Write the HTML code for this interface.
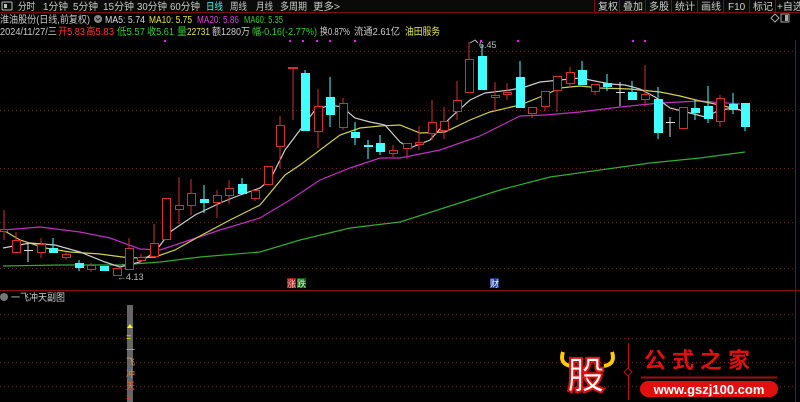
<!DOCTYPE html>
<html><head><meta charset="utf-8"><style>
body{margin:0;background:#000;width:800px;height:402px;overflow:hidden;font-family:"Liberation Sans","Noto Sans CJK SC",sans-serif}
svg{display:block}
text{font-family:"Liberation Sans","Noto Sans CJK SC",sans-serif}
</style></head><body>
<svg width="800" height="402" viewBox="0 0 800 402">
<rect width="800" height="402" fill="#000"/>
<rect x="0" y="0" width="800" height="12" fill="#0a0a0a"/>
<line x1="0" y1="12.5" x2="800" y2="12.5" stroke="#7a0d12"/>
<rect x="2" y="2" width="10" height="8" fill="none" stroke="#bbb" rx="1"/><rect x="4" y="4" width="3" height="4" fill="#bbb"/>
<g font-size="10" fill="#ccc" lengthAdjust="spacingAndGlyphs">
<text x="18" y="10" textLength="17" lengthAdjust="spacingAndGlyphs">分时</text>
<text x="43" y="10" textLength="25" lengthAdjust="spacingAndGlyphs">1分钟</text>
<text x="73" y="10" textLength="25" lengthAdjust="spacingAndGlyphs">5分钟</text>
<text x="103" y="10" textLength="31" lengthAdjust="spacingAndGlyphs">15分钟</text>
<text x="137" y="10" textLength="30" lengthAdjust="spacingAndGlyphs">30分钟</text>
<text x="170" y="10" textLength="30" lengthAdjust="spacingAndGlyphs">60分钟</text>
<text x="206" y="10" fill="#3ff" textLength="17" lengthAdjust="spacingAndGlyphs">日线</text>
<text x="230" y="10" textLength="17" lengthAdjust="spacingAndGlyphs">周线</text>
<text x="256" y="10" textLength="17" lengthAdjust="spacingAndGlyphs">月线</text>
<text x="280" y="10" textLength="27" lengthAdjust="spacingAndGlyphs">多周期</text>
<text x="313" y="10" textLength="27" lengthAdjust="spacingAndGlyphs">更多&gt;</text>
</g>
<g stroke="#7a0d12"><line x1="594.5" y1="0" x2="594.5" y2="12"/><line x1="619.5" y1="0" x2="619.5" y2="12"/><line x1="645.5" y1="0" x2="645.5" y2="12"/><line x1="671.5" y1="0" x2="671.5" y2="12"/><line x1="697.5" y1="0" x2="697.5" y2="12"/><line x1="723.5" y1="0" x2="723.5" y2="12"/><line x1="749.5" y1="0" x2="749.5" y2="12"/><line x1="775.5" y1="0" x2="775.5" y2="12"/></g>
<g font-size="10" fill="#ccc"><text x="598" y="10">复权</text><text x="623" y="10">叠加</text><text x="649" y="10">多股</text><text x="675" y="10">统计</text><text x="701" y="10">画线</text><text x="728" y="10">F10</text><text x="753" y="10">标记</text><text x="777" y="10">+自选</text></g>
<!-- legend -->
<g font-size="10">
<text x="0" y="23" fill="#ccc" textLength="90" lengthAdjust="spacingAndGlyphs">淮油股份(日线,前复权)</text>
<circle cx="98" cy="19" r="4" fill="#888"/><path d="M96 18l2 2 2-2" stroke="#222" fill="none"/>
<text x="105" y="23" fill="#ddd" textLength="40" lengthAdjust="spacingAndGlyphs">MA5: 5.74</text>
<text x="149" y="23" fill="#e6e64a" textLength="43" lengthAdjust="spacingAndGlyphs">MA10: 5.75</text>
<text x="197" y="23" fill="#e040e0" textLength="42" lengthAdjust="spacingAndGlyphs">MA20: 5.86</text>
<text x="244" y="23" fill="#3c3" textLength="39" lengthAdjust="spacingAndGlyphs">MA60: 5.35</text>
<text x="0" y="35" fill="#ccc" textLength="57" lengthAdjust="spacingAndGlyphs">2024/11/27/三</text>
<text x="58" y="35" fill="#f33" textLength="27" lengthAdjust="spacingAndGlyphs">开5.83</text>
<text x="86" y="35" fill="#f33" textLength="28" lengthAdjust="spacingAndGlyphs">高5.83</text>
<text x="117" y="35" fill="#3c3" textLength="28" lengthAdjust="spacingAndGlyphs">低5.57</text>
<text x="147" y="35" fill="#3c3" textLength="27" lengthAdjust="spacingAndGlyphs">收5.61</text>
<text x="177" y="35" fill="#3c3" textLength="10" lengthAdjust="spacingAndGlyphs">量</text>
<text x="187" y="35" fill="#e6e64a" textLength="23" lengthAdjust="spacingAndGlyphs">22731</text>
<text x="212" y="35" fill="#ccc" textLength="38" lengthAdjust="spacingAndGlyphs">额1280万</text>
<text x="252" y="35" fill="#3c3" textLength="65" lengthAdjust="spacingAndGlyphs">幅-0.16(-2.77%)</text>
<text x="320" y="35" fill="#ccc" textLength="30" lengthAdjust="spacingAndGlyphs">换0.87%</text>
<text x="354" y="35" fill="#ccc" textLength="46" lengthAdjust="spacingAndGlyphs">流通2.61亿</text>
<text x="405" y="35" fill="#e6e64a" textLength="35" lengthAdjust="spacingAndGlyphs">油田服务</text>
</g>
<path d="M771 18l4-4 4 4-4 4z" stroke="#aaa" fill="none"/><rect x="781" y="14" width="8" height="8" fill="none" stroke="#aaa"/><rect x="785" y="15" width="3" height="6" fill="#aaa"/>
<g stroke="#7a1a1a" stroke-dasharray="1 3">
<line x1="0" y1="51.5" x2="795" y2="51.5"/><line x1="0" y1="110.5" x2="795" y2="110.5"/><line x1="0" y1="168.5" x2="795" y2="168.5"/><line x1="0" y1="222.5" x2="795" y2="222.5"/><line x1="0" y1="268.5" x2="795" y2="268.5"/>
<line x1="0" y1="314.5" x2="795" y2="314.5"/><line x1="0" y1="338.5" x2="795" y2="338.5"/><line x1="0" y1="362.5" x2="795" y2="362.5"/><line x1="0" y1="386.5" x2="795" y2="386.5"/>
</g>
<line x1="795.5" y1="40" x2="795.5" y2="402" stroke="#7a0d12"/>
<line x1="0" y1="290.5" x2="800" y2="290.5" stroke="#8a0d12"/>
<g stroke="#e020e0" stroke-width="2"><line x1="165" y1="40" x2="165" y2="42"/><line x1="290" y1="40" x2="290" y2="42"/><line x1="303" y1="40" x2="303" y2="42"/><line x1="317" y1="40" x2="317" y2="42"/><line x1="330" y1="40" x2="330" y2="42"/><line x1="355" y1="40" x2="355" y2="42"/><line x1="481" y1="40" x2="481" y2="42"/><line x1="518" y1="40" x2="518" y2="42"/><line x1="633" y1="40" x2="633" y2="42"/><line x1="645" y1="40" x2="645" y2="42"/></g>
<g fill="none" stroke-width="1.2">
<polyline stroke="#3a3" points="3,266 60,265 120,265 160,262 200,257 260,252 300,240 350,228 400,222 450,206 500,190 550,177 600,170 650,163 700,158 745,152"/>
<polyline stroke="#c030c0" points="3,230 40,227 80,232 110,238 140,249 160,250 190,240 220,230 260,218 290,200 320,180 350,168 380,158 400,158 440,150 480,136 520,116 545,115 580,112 620,107 660,103 700,101 740,104"/>
<polyline stroke="#d0d050" points="3,230 20,240 45,248 70,252 100,254 130,258 155,257 175,250 200,236 230,220 260,205 285,175 300,165 320,150 340,135 360,128 380,126 400,125 420,133 445,132 470,120 490,112 520,105 545,95 560,88 580,86 600,88 630,89 660,92 680,96 700,101 720,105 740,110"/>
<polyline stroke="#ccc" points="3,248 30,243 55,245 80,252 105,262 120,267 140,262 155,252 170,232 195,215 220,203 240,195 260,188 270,180 285,150 300,130 315,110 330,105 342,107 355,118 370,122 385,125 400,142 410,148 430,140 450,118 470,100 485,93 510,90 525,87 540,82 560,80 580,78 600,82 610,84 625,85 640,89 655,97 670,108 690,113 705,117 720,110 735,108 745,112"/>
</g>
<g stroke-width="1">
<g stroke="#d03030" fill="#000">
<line x1="4" y1="210" x2="4" y2="240"/><rect x="0.5" y="229.5" width="7" height="2"/>
<line x1="16" y1="232" x2="16" y2="252"/><rect x="12.5" y="240.5" width="8" height="12"/>
<line x1="41" y1="238" x2="41" y2="258"/><rect x="37.5" y="244.5" width="8" height="8"/>
<line x1="66" y1="252" x2="66" y2="260"/><rect x="62.5" y="254.5" width="8" height="3"/>
<line x1="91" y1="263" x2="91" y2="272"/><rect x="87.5" y="265.5" width="8" height="4"/>
<rect x="113.5" y="268.5" width="8" height="7"/>
<line x1="129" y1="238" x2="129" y2="269"/><rect x="125.5" y="248.5" width="8" height="21"/>
<line x1="141" y1="254" x2="141" y2="262"/><rect x="137.5" y="257.5" width="8" height="3"/>
<line x1="154" y1="224" x2="154" y2="256"/><rect x="150.5" y="243.5" width="8" height="13"/>
<rect x="162.5" y="198.5" width="8" height="41"/>
<line x1="179" y1="177" x2="179" y2="224"/><rect x="175.5" y="205.5" width="8" height="4"/>
<line x1="191" y1="179" x2="191" y2="215"/><rect x="187.5" y="193.5" width="8" height="12"/>
<line x1="217" y1="190" x2="217" y2="218"/><rect x="213.5" y="195.5" width="8" height="7"/>
<line x1="229" y1="180" x2="229" y2="204"/><rect x="225.5" y="188.5" width="8" height="7"/>
<line x1="255" y1="190" x2="255" y2="201"/><rect x="251.5" y="190.5" width="8" height="8"/>
<rect x="264.5" y="166.5" width="8" height="18"/>
<line x1="280" y1="116" x2="280" y2="168"/><rect x="276.5" y="125.5" width="8" height="21"/>
<line x1="293" y1="68" x2="293" y2="120"/><rect x="288.5" y="67.5" width="9" height="1"/>
<line x1="318" y1="89" x2="318" y2="148"/><rect x="314.5" y="106.5" width="8" height="25"/>
<line x1="343" y1="98" x2="343" y2="130"/><rect x="339.5" y="103.5" width="8" height="24"/>
<line x1="393" y1="145" x2="393" y2="157"/><rect x="389.5" y="150.5" width="8" height="3"/>
<line x1="407" y1="143" x2="407" y2="159"/><rect x="403.5" y="143.5" width="8" height="5"/>
<line x1="419" y1="126" x2="419" y2="150"/><rect x="415.5" y="142.5" width="8" height="2"/>
<line x1="432" y1="100" x2="432" y2="140"/><rect x="428.5" y="122.5" width="8" height="11"/>
<line x1="444" y1="107" x2="444" y2="139"/><rect x="440.5" y="121.5" width="8" height="9"/>
<line x1="457" y1="81" x2="457" y2="120"/><rect x="453.5" y="100.5" width="8" height="11"/>
<line x1="469" y1="42" x2="469" y2="92"/><rect x="465.5" y="59.5" width="8" height="33"/>
<line x1="495" y1="82" x2="495" y2="112"/><rect x="491.5" y="95.5" width="8" height="2"/>
<line x1="507" y1="83" x2="507" y2="100"/><rect x="503.5" y="92.5" width="8" height="2"/>
<line x1="532" y1="107" x2="532" y2="118"/><rect x="528.5" y="107.5" width="8" height="6"/>
<line x1="545" y1="91" x2="545" y2="111"/><rect x="541.5" y="91.5" width="8" height="15"/>
<line x1="557" y1="76" x2="557" y2="112"/><rect x="553.5" y="76.5" width="8" height="14"/>
<line x1="570" y1="67" x2="570" y2="88"/><rect x="566.5" y="72.5" width="8" height="11"/>
<line x1="595" y1="84" x2="595" y2="95"/><rect x="591.5" y="84.5" width="8" height="7"/>
<line x1="645" y1="65" x2="645" y2="107"/><rect x="641.5" y="94.5" width="8" height="5"/>
<rect x="679.5" y="107.5" width="8" height="21"/>
<line x1="720" y1="95" x2="720" y2="127"/><rect x="716.5" y="98.5" width="8" height="23"/>
</g>
<g stroke="#4ff" fill="#4ff">
<line x1="53" y1="238" x2="53" y2="253"/><rect x="49.5" y="248.5" width="8" height="4"/>
<line x1="79" y1="260" x2="79" y2="271"/><rect x="75.5" y="263.5" width="8" height="4"/>
<rect x="100.5" y="266.5" width="8" height="4"/>
<line x1="204" y1="185" x2="204" y2="213"/><rect x="200.5" y="199.5" width="8" height="3"/>
<line x1="242" y1="178" x2="242" y2="195"/><rect x="238.5" y="184.5" width="8" height="9"/>
<line x1="305" y1="70" x2="305" y2="130"/><rect x="301.5" y="73.5" width="8" height="57"/>
<line x1="330" y1="77" x2="330" y2="127"/><rect x="326.5" y="97.5" width="8" height="17"/>
<line x1="355" y1="122" x2="355" y2="145"/><rect x="351.5" y="132.5" width="8" height="5"/>
<line x1="368" y1="140" x2="368" y2="159"/><rect x="364.5" y="145.5" width="8" height="1"/>
<line x1="380" y1="135" x2="380" y2="155"/><rect x="376.5" y="143.5" width="8" height="8"/>
<line x1="482" y1="45" x2="482" y2="90"/><rect x="478.5" y="56.5" width="8" height="33"/>
<line x1="520" y1="61" x2="520" y2="107"/><rect x="516.5" y="77.5" width="8" height="30"/>
<line x1="582" y1="61" x2="582" y2="85"/><rect x="578.5" y="70.5" width="8" height="14"/>
<line x1="607" y1="74" x2="607" y2="91"/><rect x="603.5" y="83.5" width="8" height="3"/>
<line x1="632" y1="81" x2="632" y2="100"/><rect x="628.5" y="92.5" width="8" height="7"/>
<line x1="658" y1="87" x2="658" y2="139"/><rect x="654.5" y="99.5" width="8" height="33"/>
<line x1="695" y1="100" x2="695" y2="120"/><rect x="691.5" y="108.5" width="8" height="4"/>
<line x1="708" y1="86" x2="708" y2="123"/><rect x="704.5" y="106.5" width="8" height="12"/>
<line x1="733" y1="93" x2="733" y2="114"/><rect x="729.5" y="104.5" width="8" height="5"/>
<line x1="745" y1="103" x2="745" y2="131"/><rect x="741.5" y="103.5" width="8" height="23"/>
</g>
<g stroke="#ddd"><line x1="28" y1="243" x2="28" y2="262"/><line x1="24" y1="250.5" x2="33" y2="250.5"/>
<line x1="620" y1="82" x2="620" y2="106"/><line x1="616" y1="92.5" x2="625" y2="92.5"/>
<line x1="670" y1="117" x2="670" y2="137"/><line x1="666" y1="122.5" x2="675" y2="122.5"/></g>
</g>
<text x="117" y="280" font-size="9" fill="#bbb">←4.13</text>
<path d="M470 43 L475 40 L478 43" stroke="#bbb" fill="none"/><text x="479" y="48" font-size="9" fill="#bbb">6.45</text>
<rect x="287" y="278" width="9" height="10" fill="#a01010"/><text x="287" y="287" font-size="9" fill="#fcc">涨</text>
<rect x="297" y="278" width="9" height="10" fill="#106010"/><text x="297" y="287" font-size="9" fill="#cfc">跌</text>
<rect x="490" y="278" width="9" height="10" fill="#1a3a8a"/><text x="490" y="287" font-size="9" fill="#fff">财</text>
<circle cx="4" cy="297" r="4" fill="#777"/>
<text x="11" y="301" font-size="10" fill="#ccc" textLength="54" lengthAdjust="spacingAndGlyphs">一飞冲天副图</text>
<rect x="127" y="305" width="6" height="97" fill="#666"/>
<path d="M130 324l3 4h-6z" fill="#ff0"/>
<g font-size="9"><text x="126" y="340" fill="#ee0">=</text><text x="126" y="353" fill="#bb8">一</text><text x="126" y="365" fill="#ca6">飞</text><text x="126" y="377" fill="#d83">冲</text><text x="126" y="389" fill="#e63">天</text><text x="126" y="400" fill="#f33">=</text></g>
<path d="M563 352 q-4 12 8 14" stroke="#ffcc00" stroke-width="4" fill="none"/>
<path d="M612 352 q4 12 -8 14" stroke="#ffcc00" stroke-width="4" fill="none"/>
<text x="567" y="389" font-size="38" font-weight="bold" fill="#fff" stroke="#e01010" stroke-width="2" font-family="Noto Sans CJK SC, sans-serif">股</text>
<line x1="628.5" y1="343" x2="628.5" y2="400" stroke="#c01010"/>
<path d="M628 368l4 4-4 4-4-4z" fill="#000" stroke="#c01010"/>
<text x="644" y="368" font-size="22" font-weight="bold" fill="#e01010" letter-spacing="6" font-family="Noto Serif CJK SC, serif">公式之家</text>
<line x1="641" y1="377.5" x2="777" y2="377.5" stroke="#a01010" stroke-width="2"/>
<rect x="640" y="381" width="138" height="16" rx="8" fill="#e01010"/>
<text x="709" y="394" font-size="13" font-weight="bold" fill="#fff" text-anchor="middle">www.gszj100.com</text>
</svg>
</body></html>
